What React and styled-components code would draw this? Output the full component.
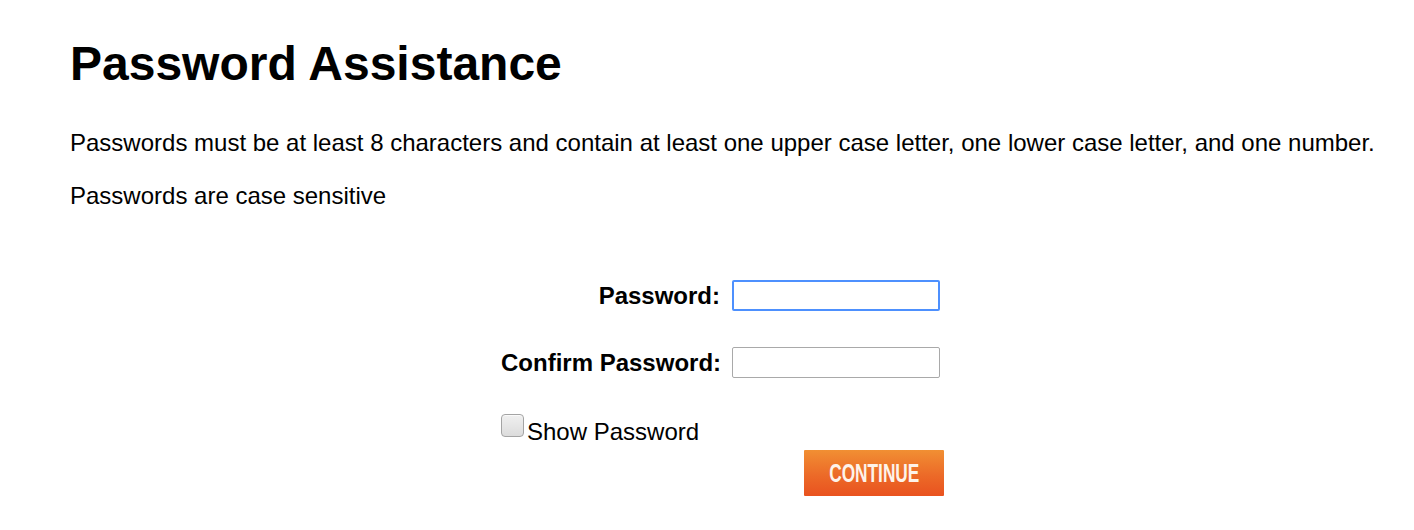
import React from 'react';
import styled, { createGlobalStyle } from 'styled-components';

const GlobalStyle = createGlobalStyle`
  html, body {
    margin: 0;
    padding: 0;
    background: #fff;
  }
  body {
    font-family: "Liberation Sans", Arial, sans-serif;
    color: #000;
  }
`;

const Page = styled.div`
  padding: 36px 20px 0 70px;
`;

const Title = styled.h1`
  margin: 0 0 38px;
  font-size: 48px;
  font-weight: bold;
`;

const Text = styled.p`
  margin: 0 0 25px;
  font-size: 24px;
`;

const Form = styled.div`
  margin: 70px 0 0 431px;
  width: 443px;
  display: flex;
  flex-direction: column;
`;

const Row = styled.div`
  display: flex;
  align-items: center;
  height: 31px;
  margin-bottom: 36px;
`;

const Label = styled.label`
  width: 219px;
  margin-right: 12px;
  text-align: right;
  font-size: 24px;
  font-weight: bold;
  white-space: nowrap;
`;

const Input = styled.input`
  box-sizing: border-box;
  width: 208px;
  height: 31px;
  margin: 0;
  padding: 2px 4px;
  font-size: 18px;
  font-family: inherit;
  border-radius: 2px;
  outline: none;
  border: ${(p) => (p.$focused ? '2px solid #4d90fe' : '1px solid #a9a9a9')};
  background: #fff;
`;

const CheckRow = styled.label`
  display: flex;
  align-items: flex-start;
  font-size: 24px;
  line-height: 27px;
  height: 32px;
`;

const Checkbox = styled.input`
  appearance: none;
  box-sizing: border-box;
  width: 23px;
  height: 23px;
  margin: 0 3px 0 0;
  border: 1px solid #a4a4a4;
  border-radius: 4px;
  background: linear-gradient(#f0f0f0, #dcdcdc);
  box-shadow: inset 0 1px 0 #fafafa;
`;

const CheckText = styled.span`
  padding-top: 4px;
`;

const ContinueButton = styled.button`
  align-self: flex-end;
  width: 140px;
  height: 46px;
  margin: 4px 0 0;
  padding: 0;
  border: none;
  border-radius: 1px;
  background: linear-gradient(#f18f33, #ec6a28 55%, #e9521f);
  color: #fdf3ea;
  cursor: pointer;
  display: flex;
  align-items: center;
  justify-content: center;
`;

const ButtonText = styled.span`
  display: inline-block;
  font-family: "Liberation Sans", Arial, sans-serif;
  font-weight: bold;
  font-size: 25px;
  transform: scaleX(0.69);
`;

export default function App() {
  return (
    <>
      <GlobalStyle />
      <Page>
        <Title>Password Assistance</Title>
        <Text>
          Passwords must be at least 8 characters and contain at least one upper case letter, one
          lower case letter, and one number.
        </Text>
        <Text>Passwords are case sensitive</Text>
        <Form>
          <Row>
            <Label htmlFor="pw">Password:</Label>
            <Input id="pw" type="password" $focused />
          </Row>
          <Row>
            <Label htmlFor="pw2">Confirm Password:</Label>
            <Input id="pw2" type="password" />
          </Row>
          <CheckRow>
            <Checkbox type="checkbox" />
            <CheckText>Show Password</CheckText>
          </CheckRow>
          <ContinueButton type="button">
            <ButtonText>CONTINUE</ButtonText>
          </ContinueButton>
        </Form>
      </Page>
    </>
  );
}
